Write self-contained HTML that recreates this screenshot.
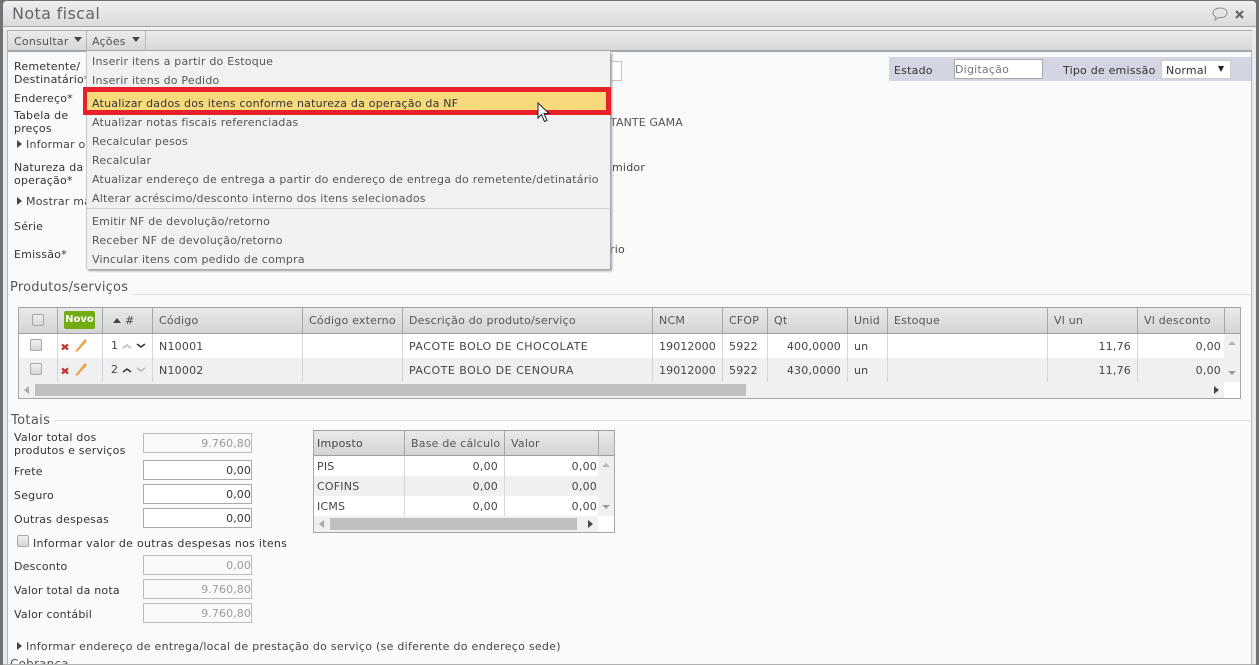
<!DOCTYPE html>
<html><head><meta charset="utf-8"><style>
html,body{margin:0;padding:0;background:#6f7376;overflow:hidden}
#p{position:relative;width:1259px;height:665px;overflow:hidden;background:#6f7376;font:11px/14px "DejaVu Sans","Liberation Sans",sans-serif;letter-spacing:.21px;color:#444}
#p div{position:absolute;box-sizing:border-box}
.t{white-space:nowrap;margin-top:1px}
.r{text-align:right}
.i{background:#fff;border:1px solid #aaa;height:20px;width:109px;left:143px;text-align:right;padding:2px 0 0;color:#333;white-space:nowrap;font-size:11px;line-height:15px;letter-spacing:.1px}
.d{background:#fafafa;border-color:#bbb;color:#999}
.hd{background:linear-gradient(#e8e9ea,#d2d4d6);border-top:1px solid #9da1a4;border-bottom:1px solid #9da1a4}
.v{width:1px;background:#a5a8ab}
.vl{width:1px;background:#d5d6d8}
.cb{width:12px;height:12px;border:1px solid #a8a8a8;border-radius:2px;background:linear-gradient(#f0f0f0,#d6d6d6)}
.m{left:92px;color:#555;white-space:nowrap;margin-top:1px}
.tri{width:0;height:0;border-top:4px solid transparent;border-bottom:4px solid transparent;border-left:5px solid #444}
</style></head><body><div id="p">
<div style="left:3px;top:1px;width:1253px;height:664px;background:#fafafa;border-radius:4px 4px 0 0"></div>
<div style="left:3px;top:1px;width:1253px;height:26px;background:linear-gradient(#eeefef,#d9dbdc);border-bottom:1px solid #a5a8aa;border-radius:4px 4px 0 0"></div>
<div style="left:3px;top:27px;width:4px;height:638px;background:#e9eaeb"></div>
<div style="left:1251px;top:27px;width:5px;height:638px;background:#e9eaeb"></div>
<div style="left:7px;top:30px;width:1px;height:634px;background:#b5b8ba"></div>
<div style="left:1251px;top:30px;width:1px;height:634px;background:#b5b8ba"></div>
<div style="left:3px;top:27px;width:1253px;height:3px;background:#f0f1f1"></div>
<div class="t" style="left:12px;top:3px;font-size:16px;line-height:20px;color:#666;letter-spacing:.35px">Nota fiscal</div>
<svg style="position:absolute;left:1211px;top:6px" width="18" height="16" viewBox="0 0 18 16"><path d="M9 2C5 2 2 4 2 7c0 2 1 3 3 4l-1 3 4-2.500h2c4 0 6-2 6-5S13 2 9 2z" fill="none" stroke="#8e9294" stroke-width="1"/></svg>
<div style="left:1235px;top:10px;width:10px;height:9px"><svg width="10" height="9" style="display:block"><path d="M1 1l7 7M8 1l-7 7" stroke="#666" stroke-width="2.200"/></svg></div>

<div style="left:7px;top:30px;width:1245px;height:22px;background:linear-gradient(#eaebec,#d5d7d9);border-top:1px solid #a9adb0;border-bottom:2px solid #a5a8ab;border-left:1px solid #b5b8ba"></div>
<div class="v" style="left:86px;top:31px;height:20px;background:#b0b3b6"></div>
<div class="v" style="left:145px;top:31px;height:20px;background:#b5b8ba"></div>
<div class="t" style="left:14px;top:34px;color:#555">Consultar</div>
<div style="left:74px;top:37px;border-left:4.500px solid transparent;border-right:4.500px solid transparent;border-top:5px solid #444"></div>
<div class="t" style="left:92px;top:34px;color:#555">Ações</div>
<div style="left:132px;top:37px;border-left:4.500px solid transparent;border-right:4.500px solid transparent;border-top:5px solid #444"></div>

<div class="t" style="left:14px;top:59px;color:#333">Remetente/</div>
<div class="t" style="left:14px;top:72px;color:#333">Destinatário*</div>
<div class="t" style="left:14px;top:91px;color:#333">Endereço*</div>
<div class="t" style="left:14px;top:108px;color:#333">Tabela de</div>
<div class="t" style="left:14px;top:121px;color:#333">preços</div>
<div class="tri" style="left:17px;top:140px"></div>
<div class="t" style="left:26px;top:137px">Informar o</div>
<div class="t" style="left:14px;top:160px;color:#333">Natureza da</div>
<div class="t" style="left:14px;top:173px;color:#333">operação*</div>
<div class="tri" style="left:17px;top:197px"></div>
<div class="t" style="left:26px;top:194px">Mostrar mais</div>
<div class="t" style="left:14px;top:219px;color:#333">Série</div>
<div class="t" style="left:14px;top:247px;color:#333">Emissão*</div>

<div style="left:600px;top:61px;width:22px;height:20px;background:#fff;border:1px solid #c4c4c4"></div>
<div class="t" style="left:610px;top:115px;color:#555;letter-spacing:.1px">TANTE GAMA</div>
<div class="t" style="left:612px;top:160px;color:#444">midor</div>
<div class="t" style="left:610px;top:242px;color:#444">rio</div>

<div style="left:889px;top:57px;width:362px;height:24px;background:#d4d5e3"></div>
<div class="t" style="left:894px;top:63px;color:#333">Estado</div>
<div style="left:954px;top:59px;width:89px;height:20px;background:#fff;border:1px solid #aaa;color:#777;padding:2px 0 0 0;line-height:15px">Digitação</div>
<div class="t" style="left:1063px;top:63px;color:#333">Tipo de emissão</div>
<div style="left:1161px;top:60px;width:70px;height:19px;background:#fff;border:1px solid #ccc;color:#333;padding:2px 0 0 4px;line-height:15px">Normal</div>
<div style="left:1218px;top:66px;border-left:3.500px solid transparent;border-right:3.500px solid transparent;border-top:6px solid #222"></div>

<div style="left:8px;top:294px;width:1243px;height:1px;background:#dfe0e1"></div>
<div style="left:8px;top:420px;width:1243px;height:1px;background:#dfe0e1"></div>
<div class="t" style="left:10px;top:279px;font-size:13px;line-height:16px;background:#fafafa;padding-right:4px;color:#555">Produtos/serviços</div>

<div style="left:18px;top:307px;width:1223px;height:92px;border:1px solid #a5a8ab;background:#eff0f2"></div>
<div class="hd" style="left:19px;top:307px;width:1221px;height:27px"></div>
<div style="left:19px;top:334px;width:1205px;height:24px;background:#fff"></div>
<div style="left:19px;top:358px;width:1205px;height:24px;background:#eff0f2"></div>
<div style="left:1224px;top:382px;width:16px;height:16px;background:#fff"></div>
<div class="v" style="left:57px;top:308px;height:25px"></div><div class="vl" style="left:57px;top:334px;height:48px"></div>
<div class="v" style="left:102px;top:308px;height:25px"></div><div class="vl" style="left:102px;top:334px;height:48px"></div>
<div class="v" style="left:152px;top:308px;height:25px"></div><div class="vl" style="left:152px;top:334px;height:48px"></div>
<div class="v" style="left:302px;top:308px;height:25px"></div><div class="vl" style="left:302px;top:334px;height:48px"></div>
<div class="v" style="left:402px;top:308px;height:25px"></div><div class="vl" style="left:402px;top:334px;height:48px"></div>
<div class="v" style="left:652px;top:308px;height:25px"></div><div class="vl" style="left:652px;top:334px;height:48px"></div>
<div class="v" style="left:722px;top:308px;height:25px"></div><div class="vl" style="left:722px;top:334px;height:48px"></div>
<div class="v" style="left:767px;top:308px;height:25px"></div><div class="vl" style="left:767px;top:334px;height:48px"></div>
<div class="v" style="left:847px;top:308px;height:25px"></div><div class="vl" style="left:847px;top:334px;height:48px"></div>
<div class="v" style="left:887px;top:308px;height:25px"></div><div class="vl" style="left:887px;top:334px;height:48px"></div>
<div class="v" style="left:1047px;top:308px;height:25px"></div><div class="vl" style="left:1047px;top:334px;height:48px"></div>
<div class="v" style="left:1137px;top:308px;height:25px"></div><div class="vl" style="left:1137px;top:334px;height:48px"></div>
<div class="v" style="left:1224px;top:308px;height:25px"></div>

<div class="cb" style="left:32px;top:314px"></div>
<div style="left:64px;top:311px;width:31px;height:18px;background:#72ab12;border-radius:2px;color:#fff;font-weight:bold;font-size:10px;line-height:18px;text-align:center;white-space:nowrap;letter-spacing:0">Novo</div>
<div style="left:113px;top:318px;border-left:4px solid transparent;border-right:4px solid transparent;border-bottom:5px solid #444"></div>
<div class="t" style="left:125px;top:313px">#</div>
<div class="t" style="left:159px;top:313px;color:#555">Código</div>
<div class="t" style="left:309px;top:313px;color:#555">Código externo</div>
<div class="t" style="left:409px;top:313px;color:#555">Descrição do produto/serviço</div>
<div class="t" style="left:659px;top:313px;color:#555">NCM</div>
<div class="t" style="left:729px;top:313px;color:#555">CFOP</div>
<div class="t" style="left:774px;top:313px;color:#555">Qt</div>
<div class="t" style="left:854px;top:313px;color:#555">Unid</div>
<div class="t" style="left:894px;top:313px;color:#555">Estoque</div>
<div class="t" style="left:1054px;top:313px;color:#555">Vl un</div>
<div class="t" style="left:1144px;top:313px;color:#555">Vl desconto</div>

<div class="cb" style="left:30px;top:339px"></div>
<div class="cb" style="left:30px;top:363px"></div>
<svg style="position:absolute;left:60px;top:337px" width="32" height="44" viewBox="0 0 32 44"><g id="a"><path d="M2 7.500l6 5M8 7.500l-6 5" stroke="#c0392b" stroke-width="2.400"/><path d="M16 13L25 2l2 2-9 10-3 1z" fill="#eba34a"/></g><path d="M2 31.500l6 5M8 31.500l-6 5" stroke="#c0392b" stroke-width="2.400"/><path d="M16 37l9-11 2 2-9 10-3 1z" fill="#eba34a"/></svg>
<div class="t" style="left:111px;top:338px">1</div>
<div class="t" style="left:111px;top:362px">2</div>
<svg style="position:absolute;left:122px;top:341px" width="26" height="34" viewBox="0 0 26 34"><path d="M1 7l4-3 4 3" fill="none" stroke="#b5b7b9" stroke-width="1.500"/><path d="M15 3l4 3 4-3" fill="none" stroke="#333" stroke-width="1.500"/><path d="M1 31l4-3 4 3" fill="none" stroke="#333" stroke-width="1.500"/><path d="M15 27l4 3 4-3" fill="none" stroke="#b5b7b9" stroke-width="1.500"/></svg>
<div class="t" style="left:159px;top:339px">N10001</div>
<div class="t" style="left:159px;top:363px">N10002</div>
<div class="t" style="left:409px;top:339px;letter-spacing:.5px">PACOTE BOLO DE CHOCOLATE</div>
<div class="t" style="left:409px;top:363px;letter-spacing:.5px">PACOTE BOLO DE CENOURA</div>
<div class="t" style="left:659px;top:339px;letter-spacing:.1px">19012000</div>
<div class="t" style="left:659px;top:363px;letter-spacing:.1px">19012000</div>
<div class="t" style="left:729px;top:339px">5922</div>
<div class="t" style="left:729px;top:363px">5922</div>
<div class="t r" style="left:768px;width:73px;top:339px">400,0000</div>
<div class="t r" style="left:768px;width:73px;top:363px">430,0000</div>
<div class="t" style="left:854px;top:339px">un</div>
<div class="t" style="left:854px;top:363px">un</div>
<div class="t r" style="left:1050px;width:81px;top:339px">11,76</div>
<div class="t r" style="left:1050px;width:81px;top:363px">11,76</div>
<div class="t r" style="left:1140px;width:81px;top:339px">0,00</div>
<div class="t r" style="left:1140px;width:81px;top:363px">0,00</div>
<div style="left:1228px;top:341px;border-left:4px solid transparent;border-right:4px solid transparent;border-bottom:4px solid #b5b7b9"></div>
<div style="left:1228px;top:371px;border-left:4px solid transparent;border-right:4px solid transparent;border-top:4px solid #9a9c9e"></div>
<div style="left:35px;top:384px;width:711px;height:12px;background:#bfc0c1"></div>
<div style="left:24px;top:386px;border-top:4px solid transparent;border-bottom:4px solid transparent;border-right:5px solid #a8aaac"></div>
<div class="tri" style="left:1214px;top:386px"></div>

<div class="t" style="left:11px;top:412px;font-size:13px;line-height:15px;background:#fafafa;padding-right:4px;color:#555;letter-spacing:.35px">Totais</div>
<div class="t" style="left:14px;top:430px;color:#333">Valor total dos</div>
<div class="t" style="left:14px;top:443px;color:#333">produtos e serviços</div>
<div class="i d" style="top:433px">9.760,80</div>
<div class="t" style="left:14px;top:464px;color:#333">Frete</div>
<div class="i" style="top:460px">0,00</div>
<div class="t" style="left:14px;top:488px;color:#333">Seguro</div>
<div class="i" style="top:484px">0,00</div>
<div class="t" style="left:14px;top:512px;color:#333">Outras despesas</div>
<div class="i" style="top:508px">0,00</div>
<div class="cb" style="left:17px;top:535px"></div>
<div class="t" style="left:33px;top:536px;color:#333;letter-spacing:.28px">Informar valor de outras despesas nos itens</div>
<div class="t" style="left:14px;top:559px;color:#333">Desconto</div>
<div class="i d" style="top:555px">0,00</div>
<div class="t" style="left:14px;top:583px;color:#333">Valor total da nota</div>
<div class="i d" style="top:579px">9.760,80</div>
<div class="t" style="left:14px;top:607px;color:#333">Valor contábil</div>
<div class="i d" style="top:603px">9.760,80</div>
<div class="tri" style="left:17px;top:642px"></div>
<div class="t" style="left:26px;top:639px;letter-spacing:.28px">Informar endereço de entrega/local de prestação do serviço (se diferente do endereço sede)</div>
<div style="left:8px;top:658px;width:1243px;height:6px;overflow:hidden"><div style="left:2px;top:-1px;font-size:12px;color:#555;white-space:nowrap">Cobrança</div></div>
<div style="left:3px;top:664px;width:1253px;height:1px;background:#aeb0b2"></div>

<div style="left:313px;top:430px;width:302px;height:103px;border:1px solid #a5a8ab;background:#eff0f2"></div>
<div class="hd" style="left:314px;top:430px;width:300px;height:26px"></div>
<div style="left:314px;top:456px;width:284px;height:20px;background:#fff"></div>
<div style="left:314px;top:476px;width:284px;height:20px;background:#eff0f2"></div>
<div style="left:314px;top:496px;width:284px;height:20px;background:#fff"></div>
<div style="left:598px;top:516px;width:16px;height:16px;background:#fff"></div>
<div class="v" style="left:404px;top:431px;height:24px"></div><div class="vl" style="left:404px;top:456px;height:60px"></div>
<div class="v" style="left:504px;top:431px;height:24px"></div><div class="vl" style="left:504px;top:456px;height:60px"></div>
<div class="v" style="left:598px;top:431px;height:24px"></div>
<div class="t" style="left:317px;top:436px;color:#444">Imposto</div>
<div class="t" style="left:411px;top:436px;color:#555">Base de cálculo</div>
<div class="t" style="left:511px;top:436px;color:#555">Valor</div>
<div class="t" style="left:317px;top:459px">PIS</div>
<div class="t" style="left:317px;top:479px">COFINS</div>
<div class="t" style="left:317px;top:499px">ICMS</div>
<div class="t r" style="left:420px;width:78px;top:459px">0,00</div>
<div class="t r" style="left:420px;width:78px;top:479px">0,00</div>
<div class="t r" style="left:420px;width:78px;top:499px">0,00</div>
<div class="t r" style="left:520px;width:77px;top:459px">0,00</div>
<div class="t r" style="left:520px;width:77px;top:479px">0,00</div>
<div class="t r" style="left:520px;width:77px;top:499px">0,00</div>
<div style="left:602px;top:463px;border-left:4px solid transparent;border-right:4px solid transparent;border-bottom:4px solid #b5b7b9"></div>
<div style="left:602px;top:505px;border-left:4px solid transparent;border-right:4px solid transparent;border-top:4px solid #9a9c9e"></div>
<div style="left:330px;top:518px;width:247px;height:12px;background:#bfc0c1"></div>
<div style="left:319px;top:520px;border-top:4px solid transparent;border-bottom:4px solid transparent;border-right:5px solid #a8aaac"></div>
<div class="tri" style="left:588px;top:520px"></div>

<div style="left:86px;top:51px;width:524px;height:218px;background:#f0f1f3;border-left:1px solid #c4c6c8;box-shadow:2px 2px 2px #9da0a3"></div>
<div class="m" style="top:54px">Inserir itens a partir do Estoque</div>
<div class="m" style="top:73px">Inserir itens do Pedido</div>
<div class="m" style="top:115px">Atualizar notas fiscais referenciadas</div>
<div class="m" style="top:134px">Recalcular pesos</div>
<div class="m" style="top:153px">Recalcular</div>
<div class="m" style="top:172px">Atualizar endereço de entrega a partir do endereço de entrega do remetente/detinatário</div>
<div class="m" style="top:191px">Alterar acréscimo/desconto interno dos itens selecionados</div>
<div style="left:87px;top:208px;width:522px;height:1px;background:#cfd0d2"></div>
<div class="m" style="top:214px">Emitir NF de devolução/retorno</div>
<div class="m" style="top:233px">Receber NF de devolução/retorno</div>
<div class="m" style="top:252px">Vincular itens com pedido de compra</div>

<div style="left:83px;top:87px;width:528px;height:28px;background:#f7da7c;border:solid #e8202a;border-width:5px 5px 5px 4px"></div>
<div class="m" style="top:96px;color:#333">Atualizar dados dos itens conforme natureza da operação da NF</div>
<svg style="position:absolute;left:537px;top:102px" width="13" height="22" viewBox="0 0 13 22"><path d="M1 1v15l3.500-3.500 3 7 2.500-1-3-7h5z" fill="#fff" stroke="#222" stroke-width="1"/></svg>
</div></body></html>
